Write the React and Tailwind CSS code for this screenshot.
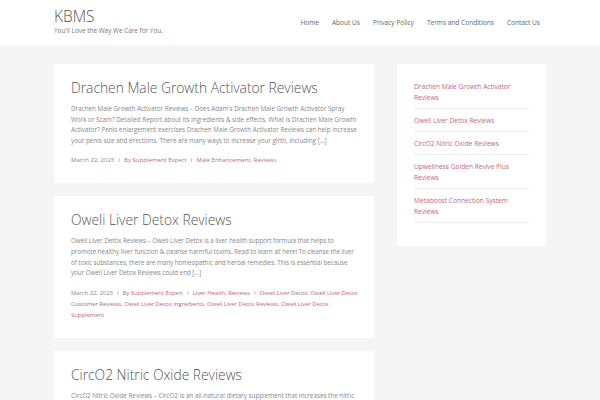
const LINK = "text-[#c0687c]";

const navItems = ["Home", "About Us", "Privacy Policy", "Terms and Conditions", "Contact Us"];

const posts = [
  {
    title: "Drachen Male Growth Activator Reviews",
    excerpt:
      "Drachen Male Growth Activator Reviews – Does Adam’s Drachen Male Growth Activator Spray Work or Scam? Detailed Report about its ingredients & side effects. What is Drachen Male Growth Activator? Penis enlargement exercises Drachen Male Growth Activator Reviews can help increase your penis size and erections. There are many ways to increase your girth, including […]",
    cats: "Male Enhancement, Reviews",
    tags: null,
    tight: false,
  },
  {
    title: "Oweli Liver Detox Reviews",
    excerpt:
      "Oweli Liver Detox Reviews – Oweli Liver Detox is a liver health support formula that helps to promote healthy liver function & cleanse harmful toxins. Read to learn all here! To cleanse the liver of toxic substances, there are many homeopathic and herbal remedies. This is essential because your Oweli Liver Detox Reviews could end […]",
    cats: "Liver Health, Reviews",
    tags: "Oweli Liver Detox, Oweli Liver Detox Customer Reviews, Oweli Liver Detox Ingredients, Oweli Liver Detox Reviews, Oweli Liver Detox Supplement",
    tight: true,
  },
  {
    title: "CircO2 Nitric Oxide Reviews",
    excerpt:
      "CircO2 Nitric Oxide Reviews – CircO2 is an all-natural dietary supplement that increases the nitric oxide levels in your body and supports healthy blood flow and circulation throughout the day.",
    cats: "Reviews",
    tags: null,
    tight: false,
  },
];

const recent = [
  "Drachen Male Growth Activator Reviews",
  "Oweli Liver Detox Reviews",
  "CircO2 Nitric Oxide Reviews",
  "Upwellness Golden Revive Plus Reviews",
  "Metaboost Connection System Reviews",
];

function Sep() {
  return <span className="mx-[4px] text-[#888]">I</span>;
}

function Post({ post }) {
  return (
    <article className="bg-white pl-[17px] pr-[15px] pt-[14px] pb-[17px]">
      <h2 className="text-[13.8px] leading-[20px] font-light text-[#555]">{post.title}</h2>
      <p
        className={`mt-[6px] text-[6.3px] leading-[10.6px] text-[#888] ${
          post.tight ? "tracking-[-0.06px]" : ""
        }`}
      >
        {post.excerpt}
      </p>
      <div
        className={`mt-[9px] text-[6.05px] leading-[11px] text-[#888] ${
          post.tight ? "tracking-[-0.1px]" : ""
        }`}
      >
        March 22, 2023
        <Sep />
        By <span className={LINK}>Supplement Expert</span>
        <Sep />
        <span className={LINK}>{post.cats}</span>
        {post.tags && (
          <>
            <Sep />
            <span className={LINK}>{post.tags}</span>
          </>
        )}
      </div>
    </article>
  );
}

export default function App() {
  return (
    <div
      className="min-h-[400px] h-[400px] overflow-hidden bg-[#f5f5f5]"
      style={{ fontFamily: '"Open Sans", "Noto Sans", sans-serif' }}
    >
      <header className="h-[45px] bg-white">
        <div className="mx-[54px] flex h-full items-start justify-between">
          <div className="pt-[7px]">
            <div className="text-[15.5px] leading-[19px] font-light text-[#555]">KBMS</div>
            <div className="text-[6.4px] leading-[9px] text-[#777]">You'll Love the Way We Care for You.</div>
          </div>
          <nav className="mr-[6px] flex gap-[13px] pt-[18px] text-[6.55px] leading-[10px] text-[#666]">
            {navItems.map((n) => (
              <span key={n}>{n}</span>
            ))}
          </nav>
        </div>
      </header>

      <div className="mx-[54px] mt-[19px] flex items-start gap-[23px]">
        <main className="flex w-[320px] flex-col gap-[13px]">
          {posts.map((p) => (
            <Post key={p.title} post={p} />
          ))}
        </main>
        <aside className="w-[149px] bg-white px-[17px] pt-[11px] pb-[23px]">
          <ul>
            {recent.map((r) => (
              <li
                key={r}
                className={`border-b border-[#ededed] py-[5.5px] text-[6.6px] leading-[11px] ${LINK}`}
              >
                {r}
              </li>
            ))}
          </ul>
        </aside>
      </div>
    </div>
  );
}
